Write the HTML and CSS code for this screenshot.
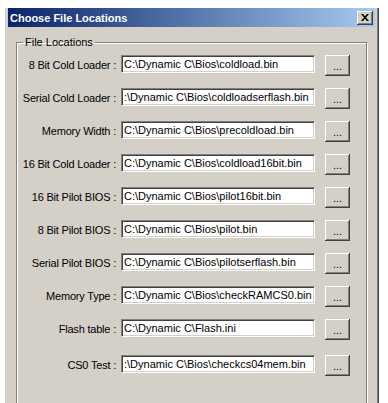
FILE: index.html
```html
<!DOCTYPE html>
<html lang="en">
<head>
    <meta charset="UTF-8">
    <title>Choose File Locations</title>
    <link rel="stylesheet" href="styles.css">
</head>
<body>
    <div class="dialog">
        <div class="titlebar">
            <span class="title">Choose File Locations</span>
            <button class="close">
                <svg width="8" height="7" viewBox="0 0 8 7">
                    <path d="M0 0h2l2 2.2L6 0h2L5 3.5 8 7H6L4 4.8 2 7H0l3-3.5z" fill="#000"/>
                </svg>
            </button>
        </div>
        <div class="content">
            <fieldset class="group">
                <legend>File Locations</legend>
                <div class="row">
                    <label>8 Bit Cold Loader :</label>
                    <div class="field">C:\Dynamic C\Bios\coldload.bin</div>
                    <button class="browse">...</button>
                </div>
                <div class="row">
                    <label>Serial Cold Loader :</label>
                    <div class="field">:\Dynamic C\Bios\coldloadserflash.bin</div>
                    <button class="browse">...</button>
                </div>
                <div class="row">
                    <label>Memory Width :</label>
                    <div class="field">C:\Dynamic C\Bios\precoldload.bin</div>
                    <button class="browse">...</button>
                </div>
                <div class="row">
                    <label>16 Bit Cold Loader :</label>
                    <div class="field">C:\Dynamic C\Bios\coldload16bit.bin</div>
                    <button class="browse">...</button>
                </div>
                <div class="row">
                    <label>16 Bit Pilot BIOS :</label>
                    <div class="field">C:\Dynamic C\Bios\pilot16bit.bin</div>
                    <button class="browse">...</button>
                </div>
                <div class="row">
                    <label>8 Bit Pilot BIOS :</label>
                    <div class="field">C:\Dynamic C\Bios\pilot.bin</div>
                    <button class="browse">...</button>
                </div>
                <div class="row">
                    <label>Serial Pilot BIOS :</label>
                    <div class="field">C:\Dynamic C\Bios\pilotserflash.bin</div>
                    <button class="browse">...</button>
                </div>
                <div class="row">
                    <label>Memory Type :</label>
                    <div class="field">C:\Dynamic C\Bios\checkRAMCS0.bin</div>
                    <button class="browse">...</button>
                </div>
                <div class="row">
                    <label>Flash table :</label>
                    <div class="field">C:\Dynamic C\Flash.ini</div>
                    <button class="browse">...</button>
                </div>
                <div class="row last">
                    <label>CS0 Test :</label>
                    <div class="field">:\Dynamic C\Bios\checkcs04mem.bin</div>
                    <button class="browse">...</button>
                </div>
            </fieldset>
        </div>
    </div>
</body>
</html>
```

FILE: styles.css
```css
body {
    margin: 0;
    background-color: #fff;
    font-family: "Liberation Sans", Arial, sans-serif;
    font-size: 11px;
    color: #000;
    overflow: hidden;
}

.dialog {
    margin: 8px 0 0 4px;
    width: 368px;
    height: 400px;
    padding: 0 3px 0 3px;
    background-color: #d4d0c8;
    border-right: 1px solid #404040;
    box-shadow: inset -1px 0 0 #808080, inset 1px 0 0 #fff;
}

.titlebar {
    display: flex;
    align-items: center;
    justify-content: space-between;
    height: 19px;
    margin-left: 1px;
    padding: 0 2px 0 2px;
    background: linear-gradient(to right, #0a246a, #a6caf0);
}

.title {
    color: #fff;
    font-weight: bold;
    font-size: 11px;
}

.close {
    display: flex;
    align-items: center;
    justify-content: center;
    width: 16px;
    height: 14px;
    padding: 0 1px 1px 0;
    background-color: #d4d0c8;
    border: none;
    box-shadow: inset -1px -1px 0 #404040, inset 1px 1px 0 #fff, inset -2px -2px 0 #808080;
}

.content {
    padding: 9px 0 0 9px;
}

.group {
    width: 349px;
    margin: 0;
    padding: 7px 0 40px 0;
    border: 1px solid #808080;
    box-shadow: inset 1px 1px 0 #fff, 1px 1px 0 #fff;
    display: flex;
    flex-direction: column;
    gap: 12px;
}

.group legend {
    margin-left: 6px;
    padding: 0 2px;
    font-size: 11px;
    color: #000;
}

.row {
    display: flex;
    align-items: flex-start;
}

.row.last {
    margin-top: 3px;
}

.row label {
    width: 99px;
    margin-right: 5px;
    text-align: right;
    white-space: nowrap;
    line-height: 21px;
    font-size: 11px;
    letter-spacing: -0.2px;
}

.field {
    width: 188px;
    height: 16px;
    padding: 0 2px;
    background-color: #fff;
    border: 1px solid;
    border-color: #808080 #fff #fff #808080;
    box-shadow: inset 1px 1px 0 #404040, inset -1px -1px 0 #d4d0c8;
    font-size: 11px;
    line-height: 17px;
    white-space: nowrap;
    overflow: hidden;
}

.browse {
    width: 25px;
    height: 21px;
    margin-left: 10px;
    padding: 0;
    background-color: #d4d0c8;
    border: none;
    box-shadow: inset -1px -1px 0 #404040, inset 1px 1px 0 #fff, inset -2px -2px 0 #808080;
    font-family: "Liberation Sans", Arial, sans-serif;
    font-size: 11px;
    color: #000;
}
```
